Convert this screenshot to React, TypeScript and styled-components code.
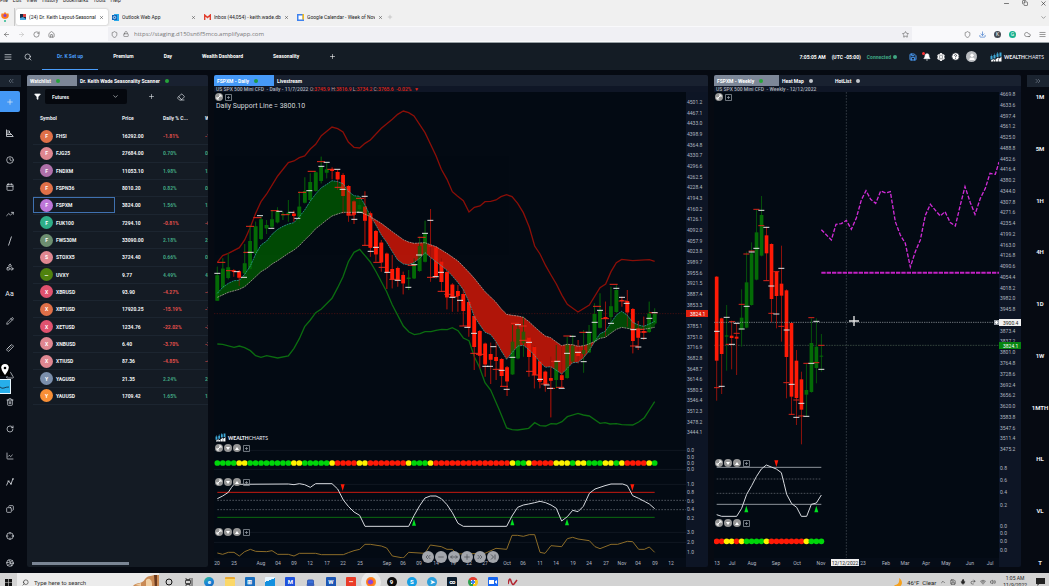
import React from "react";
import styled, { createGlobalStyle } from "styled-components";
import {
  AlignJustify, ArrowLeft, ArrowRight, Bell, Calendar, ChartLine, ChevronDown, ChevronUp, ChevronsLeft,
  ChevronsRight, CircleHelp, Clock, Copy, Crosshair, Download, Dribbble, Eraser, Filter, House, Lock, Mic, Minus,
  MoveHorizontal, Pencil, Plus, Redo2, RotateCw, Ruler, Save, Search, Settings, Shapes, Shield,
  Star, Trash2, TrendingUp, Triangle, User, Volume2, Wifi, X, Cloud, Laptop,
} from "lucide-react";

const Global = createGlobalStyle`
  * { box-sizing: border-box; }
  body { margin: 0; background: #060a12; font-family: Roboto, "Liberation Sans", sans-serif; font-size: 5px; color: #e9edf2; }
  button, input, select { font: inherit; color: inherit; border: 0; background: none; padding: 0; margin: 0; }
  a { color: inherit; text-decoration: none; }
  svg { display: block; flex: none; }
`;

const Page = styled.div`
  display: flex;
  flex-direction: column;
  height: 100vh;
  overflow: hidden;
`;

/* ---------- browser ---------- */
const Browser = styled.header`
  background: #f0f0f0;
  color: #222;
  border-bottom: 1px solid #98a0a4;
`;
const MenuStrip = styled.div`
  display: flex;
  justify-content: space-between;
  height: 8px;
  overflow: hidden;
  padding-right: 2px;
`;
const MenuItems = styled.nav`
  display: flex;
  gap: 5px;
  margin-top: -4px;
  font-size: 5px;
  line-height: 8px;
`;
const WindowButtons = styled.div`
  display: flex;
  gap: 12px;
  margin-top: -2px;
`;
const TabStrip = styled.div`
  display: flex;
  align-items: center;
  height: 18px;
  padding-right: 2px;
`;
const FireView = styled.div`
  display: flex;
  align-items: center;
  width: 15px;
  height: 18px;
  margin-right: 1px;
  border-right: 1px solid #c9c9c9;
`;
const BrowserTab = styled.div<{ $active?: boolean; $width: number }>`
  display: flex;
  align-items: center;
  gap: 3px;
  width: ${(p) => p.$width}px;
  height: 16px;
  padding: 0 4px;
  border-radius: 2px;
  background: ${(p) => (p.$active ? "#fff" : "transparent")};
  box-shadow: ${(p) => (p.$active ? "0 0 2px #aaa" : "none")};
`;
const TabTitle = styled.span`
  flex: 1;
  overflow: hidden;
  white-space: nowrap;
`;
const Spacer = styled.div`
  flex: 1;
`;
const AddressRow = styled.div`
  display: flex;
  align-items: center;
  gap: 8px;
  height: 16px;
  padding: 0 3px;
  background: #f9f9fb;
  color: #555;
`;
const AddressBox = styled.label`
  display: flex;
  align-items: center;
  gap: 5px;
  flex: 1;
  height: 14px;
  margin-left: 45px;
  margin-right: 44px;
  padding: 0 3px;
  background: #f0f0f4;
`;
const AddressText = styled.input`
  flex: 1;
  color: #777;
  font-family: "Open Sans", "Liberation Sans", sans-serif;
  font-size: 6px;
`;
const Round = styled.span<{ $color: string; $size?: number }>`
  display: inline-flex;
  align-items: center;
  justify-content: center;
  flex: none;
  width: ${(p) => p.$size ?? 7}px;
  height: ${(p) => p.$size ?? 7}px;
  border-radius: 50%;
  background: ${(p) => p.$color};
  color: #fff;
`;

/* ---------- application bar ---------- */
const AppBar = styled.header`
  display: flex;
  align-items: center;
  height: 27px;
  padding: 0 5px 0 4px;
  background: #141c25;
`;
const BarIcons = styled.div`
  display: flex;
  gap: 12px;
  width: 38px;
`;
const IconButton = styled.button`
  display: flex;
  align-items: center;
  justify-content: center;
`;
const NavTab = styled.a<{ $active?: boolean }>`
  display: flex;
  align-items: center;
  height: 27px;
  padding: 0 15px;
  font-size: 5px;
  font-weight: 700;
  color: ${(p) => (p.$active ? "#4a9cf8" : "#fff")};
  border-bottom: 1px solid ${(p) => (p.$active ? "#4a9cf8" : "transparent")};
`;
const Status = styled.div<{ $color?: string }>`
  display: flex;
  align-items: center;
  gap: 2px;
  margin-right: 6px;
  font-size: 5px;
  font-weight: 700;
  color: ${(p) => p.$color ?? "#fff"};
`;
const Tools = styled.div`
  display: flex;
  align-items: center;
  gap: 6px;
  margin: 0 13px 0 6px;
`;
const BellWrap = styled.button`
  position: relative;
  i { position: absolute; left: -1px; top: -1px; width: 3px; height: 3px; border-radius: 50%; background: #f33; }
`;
const Brand = styled.div`
  display: flex;
  align-items: center;
  gap: 2px;
  font-family: Lato, "Liberation Sans", sans-serif;
  font-size: 5px;
  font-weight: 900;
  line-height: 8px;
  span { font-weight: 400; }
`;

/* ---------- workspace ---------- */
const Workspace = styled.main`
  flex: 1;
  min-height: 0;
  display: grid;
  grid-template-columns: 21px 181px minmax(0, 494fr) minmax(0, 307fr) 22px;
  column-gap: 6px;
  padding: 5px 0 6px;
`;
const Rail = styled.aside`
  position: relative;
  display: flex;
  flex-direction: column;
  min-height: 0;
`;
const Collapse = styled.button`
  display: flex;
  align-items: center;
  justify-content: center;
  height: 12px;
  background: #1b2430;
  color: #76808e;
`;
const AddButton = styled.button`
  display: flex;
  align-items: center;
  justify-content: center;
  height: 21px;
  margin: 4px 1px 14px 0;
  border-radius: 0 2px 2px 0;
  background: #4498f5;
`;
const RailItems = styled.div`
  display: flex;
  flex: 1;
  flex-direction: column;
  justify-content: space-between;
  align-items: center;
  min-height: 0;
  margin-bottom: -3px;
  padding-right: 2px;
  button { height: 14px; font-size: 7px; line-height: 14px; }
`;
const PinBadge = styled.span`
  position: absolute;
  left: 0;
  top: 289px;
  display: flex;
  justify-content: center;
  width: 10px;
  height: 12px;
  background: #000;
`;
const BlueBadge = styled.span`
  position: absolute;
  left: 0;
  top: 304px;
  width: 11px;
  height: 15px;
  background: #27aeea;
  border: 1px solid #e8f6fd;
  border-left: 0;
`;
const Periods = styled.div`
  display: flex;
  flex: 1;
  flex-direction: column;
  justify-content: space-between;
  align-items: center;
  margin-top: 6px;
  padding-left: 4px;
  button { height: 8px; line-height: 8px; font-size: 6px; font-weight: 700; }
`;
const Panel = styled.section`
  position: relative;
  display: flex;
  flex-direction: column;
  min-width: 0;
  min-height: 0;
  overflow: hidden;
  border-radius: 2px;
  background: #141b24;
`;
const TabBar = styled.div`
  display: flex;
  flex: none;
  height: 11px;
  background: #192130;
`;
const PanelTab = styled.button<{ $bg?: string; $width: number }>`
  display: flex;
  align-items: center;
  gap: 5px;
  width: ${(p) => p.$width}px;
  padding: 0 3px;
  background: ${(p) => p.$bg ?? "transparent"};
  color: #fff;
  font-size: 5px;
  font-weight: 700;
  white-space: nowrap;
`;
const ListTools = styled.div`
  display: flex;
  align-items: center;
  height: 21px;
  padding: 0 23px 0 7px;
`;
const GroupPicker = styled.div`
  position: relative;
  display: flex;
  align-items: center;
  width: 82px;
  height: 15px;
  margin: 0 21px 0 4px;
  border-radius: 2px;
  background: #05080e;
  select { appearance: none; width: 100%; height: 15px; padding: 0 7px; font-weight: 700; font-size: 5px; }
  svg { position: absolute; right: 8px; pointer-events: none; }
`;
const Quotes = styled.table`
  width: 181px;
  height: 298px;
  padding-left: 6px;
  border-spacing: 0;
  table-layout: fixed;
  font-weight: 700;
  th { height: 21px; padding: 0; text-align: left; font-weight: 700; font-size: 5px; }
  th:first-child { padding-left: 7px; }
`;
const Cell = styled.td<{ $color?: string }>`
  padding: 0;
  border-bottom: 1px solid #1c2530;
  overflow: hidden;
  white-space: nowrap;
  color: ${(p) => p.$color ?? "#f2f4f7"};
`;
const SymbolBox = styled.div<{ $active: boolean }>`
  display: flex;
  align-items: center;
  gap: 3px;
  width: 82px;
  height: 16px;
  padding-left: 6px;
  border: 1px solid ${(p) => (p.$active ? "#3f71b0" : "transparent")};
`;
const ScrollThumb = styled.div`
  width: 97px;
  height: 3px;
  margin: auto 0 2px 5px;
  background: #7a8594;
`;
const InfoLine = styled.div`
  flex: none;
  height: 6px;
  padding-left: 2px;
  line-height: 6px;
  font-size: 5px;
  font-weight: 500;
  white-space: nowrap;
  background: #0f1626;
  color: #aeb4bd;
  b { color: #c8a0a0; font-weight: 400; }
  em { color: #e02418; font-style: normal; }
`;
const ChartGrid = styled.div`
  display: grid;
  flex: 1;
  min-height: 0;
  grid-template-columns: minmax(0, 1fr) 22px;
  grid-template-rows: minmax(0, 1fr) 9px;
  background: #030a13;
`;
const Plot = styled.svg`
  width: 100%;
  height: 100%;
`;
const Axis = styled.svg<{ $bg: string }>`
  width: 100%;
  height: 100%;
  background: ${(p) => p.$bg};
  overflow: hidden;
  text { font-size: 5px; fill: #b3b9c2; dominant-baseline: central; }
`;
const Corner = styled.div`
  background: #0d1525;
`;
const PaneControls = styled.div<{ $top: number }>`
  position: absolute;
  left: 1px;
  top: ${(p) => p.$top}px;
  display: flex;
  gap: 1px;
`;
const PaneButton = styled.button<{ $square?: boolean }>`
  display: flex;
  align-items: center;
  justify-content: center;
  width: 8px;
  height: 8px;
  border-radius: ${(p) => (p.$square ? "0" : "50%")};
  background: ${(p) => (p.$square ? "transparent" : "#969696")};
  color: ${(p) => (p.$square ? "#8a9099" : "#fff")};
`;
const Note = styled.div`
  position: absolute;
  left: 2px;
  top: 26px;
  font-size: 7px;
  line-height: 10px;
  color: #d5d8dc;
`;
const Watermark = styled.div`
  position: absolute;
  left: 1px;
  bottom: 125px;
`;
const Playback = styled.div`
  position: absolute;
  left: 208px;
  bottom: 4px;
  display: flex;
  gap: 1px;
  button {
    display: flex;
    align-items: center;
    justify-content: center;
    width: 12px;
    height: 12px;
    border-radius: 50%;
    background: #a3a6ac;
    color: #42464d;
  }
`;

/* ---------- taskbar ---------- */
const Taskbar = styled.footer`
  display: flex;
  flex: none;
  align-items: flex-start;
  height: 13px;
  overflow: hidden;
  background: #d3d3d3;
  color: #222;
`;
const Start = styled.button`
  display: flex;
  align-items: center;
  justify-content: center;
  width: 17px;
  height: 18px;
`;
const SearchBox = styled.label`
  display: flex;
  align-items: center;
  gap: 5px;
  width: 142px;
  height: 18px;
  padding-left: 5px;
  background: #ececec;
  input { width: 96px; font-size: 6px; }
  input::placeholder { color: #333; opacity: 1; }
`;
const Apps = styled.div`
  display: flex;
  justify-content: space-between;
  align-items: center;
  width: 354px;
  height: 18px;
  margin-left: 5px;
`;
const AppIcon = styled.button<{ $bg: string; $round?: boolean; $open?: boolean }>`
  display: flex;
  align-items: center;
  justify-content: center;
  width: 10px;
  height: 10px;
  border-radius: ${(p) => (p.$round ? "50%" : "1px")};
  background: ${(p) => p.$bg};
  box-shadow: ${(p) => (p.$open ? "0 0 0 5px #e9e9e9" : "none")};
  color: #fff;
  font-size: 6px;
  line-height: 10px;
  font-weight: 700;
`;
const Tray = styled.div`
  display: flex;
  align-items: center;
  gap: 4px;
  height: 18px;
  margin-left: auto;
  padding-right: 4px;
  font-size: 6px;
`;
const ClockText = styled.time`
  margin: 0 5px 0 3px;
  font-size: 5px;
  line-height: 7px;
  text-align: center;
`;

/* ---------- data ---------- */
type Pt = [number, number];
const pts = (s: string): Pt[] => s.trim().split(/\s+/).map((p) => p.split(",").map(Number) as Pt);
const shift = (p: Pt[], dx: number, dy: number): Pt[] => p.map(([x, y]) => [x + dx, y + dy]);
const str = (p: Pt[]) => p.map((q) => q.join(",")).join(" ");

const RED = "#ff1a06";
const GREEN = "#046b06";

/* colour, high, low, body top, body bottom */
const dailyBars = `g530,632,556,632 g505,593,536,593 g490,568,532,564 r538,560,541,546 r540,588,544,563 g462,570,520,550
g405,540,453,537 g395,500,409,490 g380,450,388,447 g390,432,405,415 g360,415,388,410 g352,400,365,397 g365,390,372,376
g330,395,368,374 r362,395,371,378 g305,400,350,380 g262,340,303,338 g250,335,276,330 g244,305,247,303 g200,280,229,273
g218,265,238,248 r232,268,237,243 r240,300,246,268 r250,370,255,318 r285,395,288,376 r330,402,334,374 g325,368,345,358
r304,467,350,392 r365,500,370,473 r420,515,423,493 r450,545,458,517 r488,597,491,548 r495,595,537,568 r530,590,534,571
r545,613,555,580 g540,600,563,567 g505,567,521,565 g440,545,468,543 g392,517,430,515 r357,575,466,470 r468,565,472,560
r505,605,515,576 r540,658,546,622 r580,665,584,622 r585,665,603,618 r592,708,612,663 r630,740,636,712 r672,840,678,771
r720,835,723,797 r758,860,761,823 r758,882,792,809 r755,870,801,813 r804,890,807,858 r828,918,832,874 g705,855,755,853
g700,808,717,805 g680,800,725,760 r740,860,743,801 r768,895,771,855 r810,895,814,875 r842,905,845,883 r800,982,864,872
g765,895,815,870 r770,892,856,870 g740,866,764,864 g735,818,767,815 r750,820,785,798 g720,848,780,792 g705,789,727,787
g640,757,672,755 g610,715,661,713 r635,740,681,686 g590,710,649,681 g586,668,600,666 r620,650,630,633 r600,710,633,667
r654,790,657,753 r693,780,715,743 r680,750,723,728 g635,728,671,726 g655,705,672,700`;
const weeklyBars = `r558,932,560,812 r683,912,685,792 g645,842,736,740 r692,838,737,744 r700,855,740,746 g598,770,683,718
g485,715,577,713 g457,647,490,645 g357,571,427,569 g318,499,375,497 r410,572,436,490 r460,697,462,627 r543,715,545,618
r467,755,581,617 r598,925,601,801 r697,975,699,920 r780,1005,812,924 r845,1063,868,959 g820,980,900,914 g685,908,759,906
g685,880,770,834 g732,845,797,800`;

const dailyRedTicks = pts(`34,517 60,542 112,487 120,409 142,383 194,362 226,374 276,307 305,244 333,215 364,238 386,292 422,375
450,325 468,466 502,517 518,532 550,568 605,526 635,442 663,562 695,604 715,613 733,620 760,708 793,790 810,793 860,838 882,889
915,700 938,708 940,751 960,844 977,855 1005,882 1023,895 1050,892 1035,814 1072,738 1120,727 1161,649 1185,686 1211,583 1238,633
1272,768 1290,718 1300,726 1330,668`);
const dailyWhiteTicks = pts(`22,550 80,545 102,562 122,487 150,377 184,415 208,364 244,367 262,385 298,302 334,229 350,217 382,238
398,298 433,388 449,367 464,319 482,484 498,472 532,547 563,571 595,592 613,524 627,495 645,430 661,391 693,547 677,560 727,622
750,631 772,712 792,730 826,829 840,829 850,770 875,841 890,898 907,802 924,704 957,757 990,868 1010,885 1020,895 1055,895 1042,814
1071,790 1088,739 1104,787 1121,815 1136,727 1154,697 1170,661 1203,700 1219,595 1236,622 1250,640 1285,771 1270,719 1301,745
1318,685 1334,668`);
const weeklyRedTicks = pts(`62,763 26,893 72,695 86,730 101,643 115,492 131,483 145,358 160,407 175,572 190,670 205,545 220,709
235,878 251,973 265,930 280,978 295,820 310,683 325,818 340,766`);
const weeklyWhiteTicks = pts(`26,724 41,889 56,682 72,763 86,700 101,717 116,649 131,486 145,475 160,361 175,412 190,588 205,672
220,535 236,720 251,883 265,982 280,940 295,979 310,820 325,694 340,838`);

const upperBand = [
  ...pts(`22,517 38,497 55,490 88,473 104,450 121,412 137,370 153,335 170,312 203,258 235,218 252,213 268,203 284,198 301,177 317,163
334,137 366,111 383,116 399,126 415,156 432,172 449,174 465,160 481,150 514,115 547,88 563,73 580,63 596,68 612,78 645,128 678,197
694,238 711,268`),
  ...shift(pts(`7,305 22,318 40,332 57,366 73,352 90,348 105,335 122,334 138,330 153,320 170,314 186,320 203,340 220,368 238,412
254,468 270,492 287,527 303,555 319,582 336,616 352,643 384,666 418,645 450,593 467,582 483,545 499,518 515,508 548,512 598,509
614,514`), 720, 0),
];
const lowerBand = [
  ...pts(`22,762 38,763 72,772 88,768 104,773 121,782 137,797 153,802 170,797 203,804 235,798 252,775 268,746 284,710 301,690 317,668
334,657 366,625 383,593 399,560 415,515 432,487 449,478 465,497 481,516 497,543 530,605 547,645 580,708 597,726 613,734 630,731 645,725
663,725 678,721 695,718 712,719 727,713 744,722 760,744 777,752 793,800 809,833 825,878 842,900 868,960`),
  ...shift(pts(`170,1014 186,1019 203,1020 236,1015 254,998 270,1007 287,1008 303,1001 319,1002 336,995 352,980 384,970 400,975
418,978 450,1000 465,998 480,1002 499,1001 515,1004 548,1005 566,996 583,983 598,960 614,935`), 720, 0),
];
const fast = pts(`22,610 38,592 55,580 72,572 88,571 104,553 121,528 137,492 153,465 170,453 186,433 203,418 219,409 235,402 252,398
268,380 284,360 301,333 317,312 334,293 350,283 366,272 383,275 399,281 415,304 432,317 449,319 465,345 481,378 497,404 514,435
530,457 547,485 563,510 580,522 596,524 612,518 629,505 645,488 661,502 678,515 694,527 711,541 727,558 744,578 760,599 777,636
793,680 809,704 825,727 842,734 858,755 874,783 890,808 907,787 924,768 940,766 957,779 973,795 990,817 1006,832 1022,830 1038,840
1055,852 1071,836 1088,818 1104,817 1121,803 1137,783 1154,755 1170,731 1186,724 1202,700 1219,675 1235,664 1252,676 1268,697
1285,705 1301,709 1318,702 1334,694`);
const slow = pts(`22,622 55,607 88,598 104,590 121,575 137,560 153,545 170,535 186,522 203,512 235,490 252,480 268,467 284,450
301,434 317,416 334,403 350,390 366,378 383,372 399,367 432,367 449,366 465,372 481,380 514,400 547,425 580,449 596,456 612,460
645,458 661,464 678,470 711,490 744,513 777,547 793,565 809,585 825,605 842,621 858,637 874,657 890,673 907,676 924,678 940,682
957,695 973,710 990,725 1006,738 1022,743 1038,755 1055,767 1071,763 1088,764 1104,769 1121,767 1137,762 1154,754 1170,745 1186,742
1202,730 1219,718 1235,712 1252,715 1268,718 1301,718 1334,712`);
const cloud = (from: number, to: number) => {
  const inside = ([x]: Pt) => x >= from && x <= to;
  return str([...fast.filter(inside), ...slow.filter(inside).reverse()]);
};
const dailyOsc = [
  ...shift(pts(`22,596 38,588 55,577 64,563 72,553 235,552 252,554 268,551 284,554 301,562 317,551 366,551 383,567 400,600 415,619
432,636 449,646 465,679 596,679 612,647 629,617 645,594 661,588 678,588 694,596 711,614 727,638 744,670`), 0, 630),
  ...shift(pts(`40,289 170,289 186,258 203,232 220,225 236,222 254,218 270,214 287,218 303,225 319,235 335,273 352,260 368,241 384,245
400,229 418,190 435,177 450,172 465,167 483,162 518,162 532,167 548,197 566,205 583,214 598,222 614,236`), 720, 1020),
];
const dailyRange = [
  ...shift(pts(`22,759 38,763 55,757 72,757 88,768 104,755 121,748 137,754 170,755 186,752 203,763 235,763 252,768 268,760 317,760
334,764 400,764 415,758 432,752 449,748 465,733 481,733 514,738 530,744 547,768 580,774 596,757 645,760 661,735 694,740 711,748`), 0, 630),
  ...shift(pts(`7,358 20,372 105,370 138,355 170,358 186,316 203,316 220,319 238,314 254,314 270,367 285,370 303,347 335,350 352,326
368,322 384,327 418,332 435,350 450,356 483,343 503,343 532,334 548,335 566,358 583,358 598,351 614,367`), 720, 1020),
];
const seasonal = pts(`340,419 370,450 384,403 400,401 415,391 430,418 445,384 460,330 474,302 488,328 503,340 518,303 533,309
547,305 562,395 577,435 592,460 607,531 622,485 637,450 652,376 667,343 683,362 697,378 711,365 727,398 742,408 757,345 771,290
787,338 801,373 817,325 832,295 846,250 862,253 873,216`);
const weeklyOsc = shift(pts(`26,524 41,529 86,529 101,505 116,463 131,437 145,410 160,387 175,375 190,381 205,387 220,398 228,430
236,463 251,491 266,502 280,529 296,529 310,493 325,489 340,465`), 0, 750);
const dailyDots =
  "ggggyyggggggggyygggggyrrrryyrrrrrrryggg" + "yrrrrrrrrrrrrrr" + "yggyrrrryyygyygggyygyrrrryg";
const weeklyDots = "rryyryggggyrrrrrrryggg";
const dotColor: Record<string, string> = { g: "#00d60a", y: "#fff200", r: RED };

const quotes: [string, string, string, string, string][] = [
  ["FHSI", "16292.00", "-1.81%", "-1", "#df7048"],
  ["FJG25", "27684.00", "0.70%", "0.", "#df8791"],
  ["FNDXM", "11053.10", "1.98%", "1.", "#af70aa"],
  ["FSPN36", "8010.20", "0.82%", "0.", "#df7048"],
  ["FSPXM", "3824.00", "1.56%", "1.", "#bd76d8"],
  ["FUK100", "7294.10", "-0.81%", "-0", "#2eae88"],
  ["FWS30M", "33090.00", "2.18%", "2.", "#6d8f70"],
  ["STOXX5", "3724.40", "0.66%", "0.", "#df8791"],
  ["UVXY", "9.77", "4.49%", "4.", "#50820e"],
  ["XBRUSD", "93.90", "-4.27%", "-4", "#e0526f"],
  ["XBTUSD", "17920.25", "-15.19%", "-1", "#df7048"],
  ["XETUSD", "1234.76", "-22.02%", "-2", "#e0526f"],
  ["XNBUSD", "6.40", "-3.70%", "-3", "#df8791"],
  ["XTIUSD", "87.36", "-4.85%", "-4", "#df8791"],
  ["YAGUSD", "21.35", "2.24%", "2.", "#7b8fac"],
  ["YAUUSD", "1709.42", "1.65%", "1.", "#f98f36"],
];

/* ---------- chart parts ---------- */
const Bars = ({ data, x0, step, width }: { data: string; x0: number; step: number; width: number }) => (
  <>
    {data.trim().split(/\s+/).map((bar, i) => {
      const [hi, lo, top, bottom] = bar.slice(1).split(",").map(Number);
      const x = x0 + i * step;
      const up = bar[0] === "g";
      return (
        <g key={i}>
          <rect x={x - 1.5} y={hi} width={3} height={lo - hi} fill={up ? "#06520b" : "#8f120c"} />
          <rect x={x - width / 2} y={top} width={width} height={bottom - top} fill={up ? GREEN : RED} />
        </g>
      );
    })}
  </>
);
const Ticks = ({ at, color, width }: { at: Pt[]; color: string; width: number }) => (
  <path d={at.map(([x, y]) => `M${x - width / 2} ${y}h${width}`).join("")} stroke={color} strokeWidth={3} />
);
const Dots = ({ data, x0, step, y }: { data: string; x0: number; step: number; y: number }) => (
  <>
    {[...data].map((c, i) => (
      <circle key={i} cx={x0 + i * step} cy={y} r={8.6} fill={dotColor[c]} />
    ))}
  </>
);
const Line = ({ data, color, width = 3, dash }: { data: Pt[]; color: string; width?: number; dash?: string }) => (
  <polyline points={str(data)} fill="none" stroke={color} strokeWidth={width} strokeDasharray={dash} />
);
const Arrow = ({ x, y, up }: { x: number; y: number; up?: boolean }) => (
  <path d={up ? `M${x} ${y - 10}l6 20h-12z` : `M${x} ${y + 10}l6 -20h-12z`} fill={up ? "#00e020" : RED} />
);

type Label = { at: number; text: string };
/* labels sit at a share of the pane's 466 units of height; one that a tag would cover is left out */
const PriceAxis = ({ labels, tags }: { labels: Label[]; tags: (Label & { bg: string; color: string })[] }) => (
  <Axis $bg="#0d1525">
    {labels.filter((l) => tags.every((t) => Math.abs(t.at - l.at) > 4)).map((l, i) => (
      <text key={i} x="1" y={`${(l.at / 466) * 100}%`}>{l.text}</text>
    ))}
    {tags.map((t) => (
      <svg key={t.text} y={`${(t.at / 466) * 100}%`} overflow="visible">
        <rect x="0" y="-4" width="22" height="7" fill={t.bg} />
        <text x="4" y="0" style={{ fill: t.color }}>{t.text}</text>
      </svg>
    ))}
  </Axis>
);
const scale = (first: number, step: number, count: number, y0: number, dy: number): Label[] =>
  Array.from({ length: count }, (_, i) => ({ at: y0 + i * dy, text: (first - i * step).toFixed(1) }));
const list = (s: string): Label[] => s.split(" ").map((p) => {
  const [at, text] = p.split(":");
  return { at: Number(at), text };
});
const TimeAxis = ({ labels, span, tag }: { labels: Label[]; span: number; tag?: Label }) => (
  <Axis $bg="#050c17">
    {labels.map((l) => (
      <text key={l.at} x={`${(l.at / span) * 100}%`} y="5" textAnchor="middle">{l.text}</text>
    ))}
    {tag && (
      <svg x={`${(tag.at / span) * 100}%`} overflow="visible">
        <rect x="-14" y="1" width="28" height="7" fill="#f0f0f0" />
        <text x="0" y="5" textAnchor="middle" style={{ fill: "#222" }}>{tag.text}</text>
      </svg>
    )}
  </Axis>
);

const dailyAxis = [
  ...scale(4501.2, 34.1, 32, 10, 10.66),
  ...list("358:0.0 365:0.0 371:0.0 377:0.0 392:1.0 400:0.8 409:0.6 417:0.4 426:0.2 440:3.0 450:2.0 460:1.0"),
];
const weeklyAxis = [
  ...scale(4669.8, 36.2, 34, 2, 10.76),
  ...list("376:0.8 388:0.6 400:0.4 413:0.2 434:0.0 441:0.0 449:0.0 458:0.0"),
];
const dailyTimes = list(
  "3:20 20:25 47:Aug 64:04 80:09 96:12 113:17 129:22 146:25 173:Sep 189:06 205:09 222:14 239:19 255:22 271:27 293:Oct 309:06 326:11 342:14 359:19 375:24 392:27 408:Nov 424:04 441:09 457:12",
);
const weeklyTimes = list("3:13 18:Jul 38:Aug 62:Sep 83:Oct 107:Nov 149:23 172:Feb 191:Mar 212:Apr 232:May 256:Jun 276:Jul");

const Controls = ({ top, full }: { top: number; full?: boolean }) => (
  <PaneControls $top={top}>
    <PaneButton aria-label="Edit study">
      <svg width="6" height="6" viewBox="0 0 6 6"><path d="M1.500 4.500l3-3M1 3v2h2M3 1h2v2" fill="none" stroke="#fff" /></svg>
    </PaneButton>
    {full && <PaneButton aria-label="Move down"><svg width="4" height="3" viewBox="0 0 4 3"><path d="M0 0h4L2 3z" fill="#fff" /></svg></PaneButton>}
    {full && <PaneButton aria-label="Move up"><svg width="4" height="3" viewBox="0 0 4 3"><path d="M0 3h4L2 0z" fill="#fff" /></svg></PaneButton>}
    <PaneButton $square aria-label="Expand">
      <svg width="7" height="7" viewBox="0 0 7 7" fill="none" stroke="currentColor">
        <path d="M.5.5h6v6h-6zM2 3.5h3M3.5 2v3" strokeWidth=".8" />
      </svg>
    </PaneButton>
  </PaneControls>
);

const LogoMark = ({ size }: { size: number }) => (
  <svg width={size + 2} height={size} viewBox="0 0 24 20">
    <path d="M1 8h4v7H1zM7 6h4v7H7zM13 3h4v7h-4zM19 1h4v8h-4zM2.500 5h1v4h-1zM8.500 3h1v4h-1zM14.500 0h1v4h-1z" fill="#3fa9d8" />
    <path d="M2 17l5-3 3 2 6-5 3 2 4-4v10H2z" fill="#fff" />
    <path d="M6 15h1v5H6zM11 15h1v5h-1zM17 13h1v7h-1z" fill="#141c25" />
  </svg>
);

const Glyph = ({ d }: { d: string }) => (
  <svg width="8" height="10" viewBox="0 0 8 10" fill="none" stroke="#dfe3e8" strokeWidth=".8"><path d={d} /></svg>
);

const railIcons: [string, React.ReactNode][] = [
  ["Chart type", <Glyph d="M.5 1.500v7h7M.5 3h3v2h-3M.5 6.500h5l-2-2M7 8l-2-2" />], ["Interval", <Clock size={8} />],
  ["Calendar", <Calendar size={8} />], ["Trend", <TrendingUp size={8} />], ["Line", <Glyph d="M2.500 9.500l3-9" />],
  ["Shapes", <Shapes size={8} />], ["Text", "Aa"], ["Draw", <Pencil size={8} />],
  ["Measure", <Ruler size={8} transform="scale(-1 1)" />], ["Pattern", <Triangle size={8} />],
  ["Delete", <Trash2 size={8} />], ["Reload", <RotateCw size={8} />], ["Study", <ChartLine size={8} />],
  ["Strategy", <Glyph d="M.5 8.500l2-4.500 2.500 3L7 1.500M1.500 4h2M4 7h2M6 2h2" />],
  ["Copy", <Copy size={8} transform="scale(-1 1)" />], ["Crosshair", <Crosshair size={8} />], ["Web", <Dribbble size={8} />],
];

const dashed = { stroke: "#70767e", strokeWidth: 2, strokeDasharray: "5 4" };

export default function App() {
  return (
    <Page>
      <Global />
      <Browser>
        <MenuStrip>
          <MenuItems>
            {["File", "Edit", "View", "History", "Bookmarks", "Tools", "Help"].map((m) => <a href="#" key={m}>{m}</a>)}
          </MenuItems>
          <WindowButtons>
            <IconButton aria-label="Minimize"><Minus size={7} /></IconButton>
            <IconButton aria-label="Restore"><Copy size={6} /></IconButton>
            <IconButton aria-label="Close"><X size={7} /></IconButton>
          </WindowButtons>
        </MenuStrip>
        <TabStrip>
          <FireView>
            <svg width="10" height="12" viewBox="0 0 10 12">
              <path d="M2 2l1 1 2-2 2 2 1-1c2 3 0 6-3 6S0 5 2 2z" fill="#ff7b1c" />
              <circle cx="5" cy="4.500" r="1.500" fill="#8b3fd0" /><circle cx="5" cy="10" r="1" fill="#28b890" />
            </svg>
          </FireView>
          <BrowserTab $active $width={92}>
            <svg width="6" height="6" viewBox="0 0 6 6"><path d="M0 0h6v6H0z" fill="#1d2b46" /><path d="M3 0h3v3H3z" fill="#d44" /><path d="M0 4l3-1 3 2v1H0z" fill="#49a8de" /></svg>
            <TabTitle>(24) Dr. Keith Layout-Seasonal -</TabTitle><IconButton aria-label="Close tab"><X size={5} /></IconButton>
          </BrowserTab>
          <BrowserTab $width={92}>
            <svg width="7" height="7" viewBox="0 0 7 7"><path d="M2 0h5v7H2z" fill="#28a8ea" /><path d="M0 1h5v5H0z" fill="#0f64b8" /><circle cx="2.500" cy="3.500" r="1.200" fill="none" stroke="#fff" strokeWidth=".7" /></svg>
            <TabTitle>Outlook Web App</TabTitle><IconButton aria-label="Close tab"><X size={5} /></IconButton>
          </BrowserTab>
          <BrowserTab $width={93}>
            <svg width="7" height="6" viewBox="0 0 7 6"><path d="M.7 6V1l2.800 2.500L6.300 1v5" fill="none" stroke="#e2402f" strokeWidth="1.400" /></svg>
            <TabTitle>Inbox (44,054) - keith.wade.db</TabTitle><IconButton aria-label="Close tab"><X size={5} /></IconButton>
          </BrowserTab>
          <BrowserTab $width={94}>
            <svg width="7" height="7" viewBox="0 0 7 7"><path d="M0 0h7v7H0z" fill="#3f82ee" /><path d="M1.500 1.500h4v4h-4z" fill="#fff" /><path d="M5.500 0H7v5.500H5.500z" fill="#f7bb18" /></svg>
            <TabTitle>Google Calendar - Week of Nov</TabTitle><IconButton aria-label="Close tab"><X size={5} /></IconButton>
          </BrowserTab>
          <IconButton aria-label="New tab"><Plus size={6} color="#aaa" /></IconButton>
          <Spacer />
          <IconButton aria-label="List tabs"><ChevronDown size={7} color="#666" /></IconButton>
        </TabStrip>
        <AddressRow>
          <IconButton aria-label="Back"><ArrowLeft size={7} /></IconButton>
          <IconButton aria-label="Forward"><ArrowRight size={7} color="#bbb" /></IconButton>
          <IconButton aria-label="Reload"><RotateCw size={7} /></IconButton>
          <IconButton aria-label="Home"><House size={7} /></IconButton>
          <AddressBox>
            <Shield size={7} /><Lock size={6} />
            <AddressText aria-label="Address" defaultValue="https://staging.d150sn6f5mco.amplifyapp.com" />
            <Star size={7} />
          </AddressBox>
          <Shield size={7} /><Download size={7} color="#2266c4" /><Round $color="#444a52">K</Round><Round $color="#17b08e">G</Round>
          <Cloud size={7} /><AlignJustify size={7} />
        </AddressRow>
      </Browser>

      <AppBar>
        <BarIcons>
          <IconButton aria-label="Menu"><AlignJustify size={8} /></IconButton>
          <IconButton aria-label="Search"><Search size={8} /></IconButton>
        </BarIcons>
        {["Dr. K Set up", "Premium", "Day", "Wealth Dashboard", "Seasonality"].map((t, i) => (
          <NavTab href="#" key={t} $active={i === 0}>{t}</NavTab>
        ))}
        <NavTab as="button" aria-label="Add layout"><Plus size={7} /></NavTab>
        <Spacer />
        <Status>7:05:05 AM</Status>
        <Status>(UTC -05:00)</Status>
        <Status $color="#3fa683">Connected <Round $color="#3fa683" $size={4} /></Status>
        <Tools>
          <IconButton aria-label="Save"><Save size={8} color="#4a9cf8" strokeWidth={3} /></IconButton>
          <BellWrap aria-label="Alerts"><Bell size={8} fill="#fff" /><i /></BellWrap>
          <IconButton aria-label="Settings"><Settings size={8} strokeWidth={4} color="#fff" /></IconButton>
          <IconButton aria-label="Help"><CircleHelp size={9} fill="#fff" color="#141c25" /></IconButton>
          <Round as="button" aria-label="Account" $color="#b9bcc0" $size={11}><User size={8} fill="#fff" /></Round>
        </Tools>
        <Brand><LogoMark size={10} /><div>WEALTH<span>CHARTS</span></div></Brand>
      </AppBar>

      <Workspace>
        <Rail>
          <Collapse aria-label="Collapse left"><ChevronsLeft size={8} /></Collapse>
          <AddButton aria-label="Add"><Plus size={8} /></AddButton>
          <RailItems>
            {railIcons.map(([name, icon]) => (
              <IconButton key={name} aria-label={name}>{icon}</IconButton>
            ))}
          </RailItems>
          <PinBadge><svg width="8" height="11" viewBox="0 0 8 11"><path d="M4 0c5 0 5 5 0 11-5-6-5-11 0-11z" fill="#fff" /><circle cx="4" cy="4" r="1.300" /></svg></PinBadge>
          <BlueBadge><svg width="10" height="13" viewBox="0 0 10 13"><path d="M0 7q2 2 4 1t5-1" fill="none" stroke="#123" strokeWidth=".8" /></svg></BlueBadge>
        </Rail>

        <Panel>
          <TabBar>
            <PanelTab $bg="#7d8798" $width={50}>Watchlist <Round $color="#26a33a" $size={4} /></PanelTab>
            <PanelTab $width={110}>Dr. Keith Wade Seasonality Scanner <Round $color="#26a33a" $size={4} /></PanelTab>
          </TabBar>
          <ListTools>
            <IconButton aria-label="Filter"><Filter size={7} fill="#fff" /></IconButton>
            <GroupPicker>
              <select aria-label="Group"><option>Futures</option></select>
              <ChevronDown size={7} />
            </GroupPicker>
            <IconButton aria-label="Add symbol"><Plus size={7} /></IconButton>
            <Spacer />
            <IconButton aria-label="Clear"><Eraser size={8} /></IconButton>
          </ListTools>
          <Quotes>
            <colgroup><col width="89" /><col width="41" /><col width="42" /><col /></colgroup>
            <thead><tr><th>Symbol</th><th>Price</th><th>Daily % C...</th><th>W</th></tr></thead>
            <tbody>
              {quotes.map(([name, price, daily, week, color]) => {
                const tone = daily[0] === "-" ? "#e0504c" : "#41a683";
                return (
                  <tr key={name}>
                    <Cell><SymbolBox $active={name === "FSPXM"}><Round $color={color} $size={13}>{name === "UVXY" ? "—" : name[0]}</Round>{name}</SymbolBox></Cell>
                    <Cell>{price}</Cell>
                    <Cell $color={tone}>{daily}</Cell>
                    <Cell $color={tone}>{week}</Cell>
                  </tr>
                );
              })}
            </tbody>
          </Quotes>
          <ScrollThumb />
        </Panel>

        <Panel>
          <TabBar>
            <PanelTab $bg="#4699f7" $width={60}>FSPXM - Daily <Round $color="#1d9a44" $size={4} /></PanelTab>
            <PanelTab $width={41}>Livestream</PanelTab>
          </TabBar>
          <InfoLine>US SPX 500 Mini CFD &nbsp;- Daily - 11/7/2022 <b>O:</b><em>3745.9</em> <b>H:</b><em>3816.9</em> <b>L:</b><em>3734.2</em> <b>C:</b><em>3765.6 &nbsp;-0.02% &nbsp;▼</em></InfoLine>
          <ChartGrid>
            <Plot viewBox="12 6 1416 1398" preserveAspectRatio="none">
              <path d="M12 1081h1416M12 1138h1416M12 1183h1416M12 1327h1416M12 1357h1416" stroke="#18202b" strokeWidth={2} />
              <path d="M12 671h1416" stroke="#5a1010" strokeWidth={2} strokeDasharray="4 4" />
              <Line data={upperBand} color="#8a0f08" width={4} />
              <Line data={lowerBand} color="#0b6c10" width={4} />
              <Bars data={dailyBars} x0={22} step={16.4} width={11} />
              <polygon points={cloud(0, 481)} fill="#014a05" />
              <polygon points={cloud(481, 1154)} fill="#b01509" />
              <polygon points={cloud(1154, 1400)} fill="#014a05" />
              <g opacity=".75"><Bars data={dailyBars} x0={22} step={16.4} width={11} /></g>
              <Line data={fast} color="#35b5b5" width={2} dash="6 2" />
              <Line data={slow} color="#c9b9b0" width={2} dash="6 2" />
              <Ticks at={dailyRedTicks} color="#e8291b" width={24} />
              <Ticks at={dailyWhiteTicks} color="#e3e3e3" width={18} />
              <Dots data={dailyDots} x0={22} step={16.4} y={1119} />
              <path d="M22 1207H1334" stroke="#c81a10" strokeWidth={3} />
              <path d="M22 1231H1428M22 1259H1428" {...dashed} />
              <path d="M22 1282H1334" stroke="#0b6c10" strokeWidth={3} />
              <Line data={dailyOsc} color="#d6d9de" width={3} />
              <Line data={dailyRange} color="#8c6c28" width={3} />
              <Arrow x={398} y={1193} /><Arrow x={1267} y={1193} />
              <Arrow up x={612} y={1297} /><Arrow up x={907} y={1296} /><Arrow up x={1071} y={1296} />
            </Plot>
            <PriceAxis labels={dailyAxis} tags={[{ at: 222, text: "3824.1", bg: "#e0200e", color: "#fff" }]} />
            <TimeAxis labels={dailyTimes} span={472} />
            <Corner />
          </ChartGrid>
          <Controls top={18} />
          <Note>Daily Support Line = 3800.10</Note>
          <Watermark><Brand><LogoMark size={9} /><div>WEALTH<span>CHARTS</span></div></Brand></Watermark>
          <Controls top={369} full />
          <Controls top={403} full />
          <Controls top={453} full />
          <Playback>
            <button aria-label="Rewind"><ChevronsLeft size={8} /></button>
            <button aria-label="Zoom out"><Minus size={8} /></button>
            <button aria-label="Fit"><MoveHorizontal size={8} /></button>
            <button aria-label="Zoom in"><Plus size={8} /></button>
            <button aria-label="Forward"><ChevronsRight size={8} /></button>
            <button aria-label="Latest"><svg width="6" height="6" viewBox="0 0 6 6"><path d="M1 .5L3.500 3 1 5.500M5 .5v5" fill="none" stroke="currentColor" strokeWidth=".8" /></svg></button>
          </Playback>
        </Panel>

        <Panel>
          <TabBar>
            <PanelTab $bg="#7d8798" $width={65}>FSPXM - Weekly <Round $color="#26a33a" $size={4} /></PanelTab>
            <PanelTab $width={53}>Heat Map <Round $color="#c3c7cd" $size={4} /></PanelTab>
            <PanelTab $width={45}>HotList <Round $color="#c3c7cd" $size={4} /></PanelTab>
          </TabBar>
          <InfoLine>US SPX 500 Mini CFD &nbsp;- Weekly - 12/12/2022</InfoLine>
          <ChartGrid>
            <Plot viewBox="18 6 855 1398" preserveAspectRatio="none">
              <path d="M415 6V1404" stroke="#4a515a" strokeWidth={2} strokeDasharray="5 4" />
              <path d="M18 766H873" stroke="#4c5f50" strokeWidth={2} strokeDasharray="5 3" />
              <Bars data={weeklyBars} x0={26} step={14.96} width={11} />
              <Ticks at={weeklyRedTicks} color="#d8241a" width={18} />
              <Ticks at={weeklyWhiteTicks} color="#e3e3e3" width={18} />
              <Line data={seasonal} color="#d02cd6" width={4} dash="12 5" />
              <path d="M340 548H873" stroke="#c322c4" strokeWidth={6} strokeDasharray="13 3" />
              <path d="M18 697H873" stroke="#a2a7ad" strokeWidth={2} strokeDasharray="4 3" />
              <path d="M423 693h30M438 678v30" stroke="#e8e8e8" strokeWidth={4} />
              <path d="M858 690h15v15h-15z" fill="#9aa0a8" /><path d="M861 697h9M865.500 693v9" stroke="#fff" strokeWidth={3} />
              <path d="M26 1132H340M26 1243H340" stroke="#8d939b" strokeWidth={3} />
              <path d="M26 1167H340M26 1210H340" {...dashed} />
              <Line data={weeklyOsc} color="#d6d9de" width={3} />
              <Arrow x={205} y={1121} /><Arrow up x={115} y={1257} /><Arrow up x={325} y={1257} />
              <Dots data={weeklyDots} x0={26} step={14.96} y={1354} />
            </Plot>
            <PriceAxis labels={weeklyAxis} tags={[
              { at: 231, text: "3900.4", bg: "#f2f2f2", color: "#222" },
              { at: 254, text: "3824.1", bg: "#068510", color: "#fff" },
            ]} />
            <TimeAxis labels={weeklyTimes} span={285} tag={{ at: 131, text: "12/12/2022" }} />
            <Corner />
          </ChartGrid>
          <Controls top={18} />
          <Controls top={384} full />
          <Controls top={444} full />
        </Panel>

        <Rail>
          <Collapse aria-label="Collapse right"><ChevronsRight size={8} /></Collapse>
          <Periods>
            {["1M", "5M", "1H", "4H", "1D", "1W", "1MTH", "HL", "VL", "T"].map((p) => <button key={p}>{p}</button>)}
          </Periods>
        </Rail>
      </Workspace>

      <Taskbar>
        <Start aria-label="Start">
          <svg width="7" height="7" viewBox="0 0 7 7"><path d="M0 0h3.200v3.200H0zM3.800 0H7v3.200H3.800zM0 3.800h3.200V7H0zM3.800 3.800H7V7H3.800z" fill="#111" /></svg>
        </Start>
        <SearchBox>
          <Search size={7} transform="scale(-1 1)" />
          <input aria-label="Search" placeholder="Type here to search" />
          <svg width="27" height="14" viewBox="0 0 27 14"><path d="M0 12c5-6 10-2 13-8 3-4 8-3 9-4h5v14H0z" fill="#c98a55" /><path d="M14 5c3-3 6 0 6 4v5h-6zM3 10l6-2v3z" fill="#f0cfa4" /><path d="M22 0h3v14h-2z" fill="#6b3a1e" /></svg>
        </SearchBox>
        <Apps>
          <AppIcon $bg="transparent" aria-label="Cortana"><svg width="8" height="8" viewBox="0 0 8 8"><circle cx="4" cy="4" r="3" fill="none" stroke="#111" /></svg></AppIcon>
          <AppIcon $bg="transparent" aria-label="Task view"><svg width="8" height="8" viewBox="0 0 8 8"><path d="M1 0v1.500h4V0M1 8V6.500h4V8M.5 2.500h5v3h-5zM7 0v8" fill="none" stroke="#222" strokeWidth=".8" /></svg></AppIcon>
          <AppIcon $bg="linear-gradient(150deg,#35c47b,#1b87d8 45%,#1264b8)" $round>e</AppIcon>
          <AppIcon $bg="linear-gradient(#e9a932 25%,#fbd767 25%)" aria-label="Files" />
          <AppIcon $bg="#1a6fc0">⊞</AppIcon>
          <AppIcon $bg="linear-gradient(160deg,#e8f6ff 35%,#1390df 36%)" aria-label="Mail" />
          <AppIcon $bg="#1f52dc">M</AppIcon>
          <AppIcon $bg="transparent" aria-label="Remote"><Laptop size={9} color="#234aa8" fill="#3a6fd6" /></AppIcon>
          <AppIcon $bg="#1c56b4">W</AppIcon>
          <AppIcon $bg="#ea3c28">••</AppIcon>
          <AppIcon $bg="radial-gradient(circle at 45% 50%,#8b48d8 30%,#ff6a20 36%,#ffc02e)" $round $open aria-label="Firefox" />
          <AppIcon $bg="#0c0c0c" $round>9</AppIcon>
          <AppIcon $bg="#169fe4" $round>S</AppIcon>
          <AppIcon $bg="#2b9fdc" $round>➤</AppIcon>
          <AppIcon $bg="#0b1c2c">∞</AppIcon>
          <AppIcon $bg="radial-gradient(#3f80f0 24%,#fff 25% 33%,transparent 34%),conic-gradient(from -60deg,#e23d30 0 33%,#f7c61c 0 66%,#2ba04c 0)" $round aria-label="Chrome" />
          <AppIcon $bg="#1767f2" aria-label="Zoom"><svg width="8" height="4" viewBox="0 0 8 4"><path d="M0 0h5v4H0zM6 1.500L8 0v4L6 2.500z" fill="#fff" /></svg></AppIcon>
          <AppIcon $bg="transparent" aria-label="Signals"><svg width="10" height="8" viewBox="0 0 10 8"><path d="M0 6q1.500-8 3-3t3 3 3-4" fill="none" stroke="#b32430" strokeWidth="1.500" /></svg></AppIcon>
        </Apps>
        <Tray>
          <svg width="9" height="9" viewBox="0 0 9 9"><path d="M5 0c5 3 3 9-1 9-2 0-3-1-4-2 4 0 6-3 5-7z" fill="#f5a01c" /></svg>
          <span>46°F&nbsp; Clear</span>
          <ChevronUp size={6} /><Save size={6} /><Mic size={6} fill="#222" /><Redo2 size={6} /><Wifi size={6} /><Volume2 size={6} />
          <ClockText>1:05 AM<br />11/9/2022</ClockText>
          <svg width="9" height="8" viewBox="0 0 9 8"><path d="M0 0h9v6H3L1.500 8V6H0z" fill="#222" /></svg>
        </Tray>
      </Taskbar>
    </Page>
  );
}
